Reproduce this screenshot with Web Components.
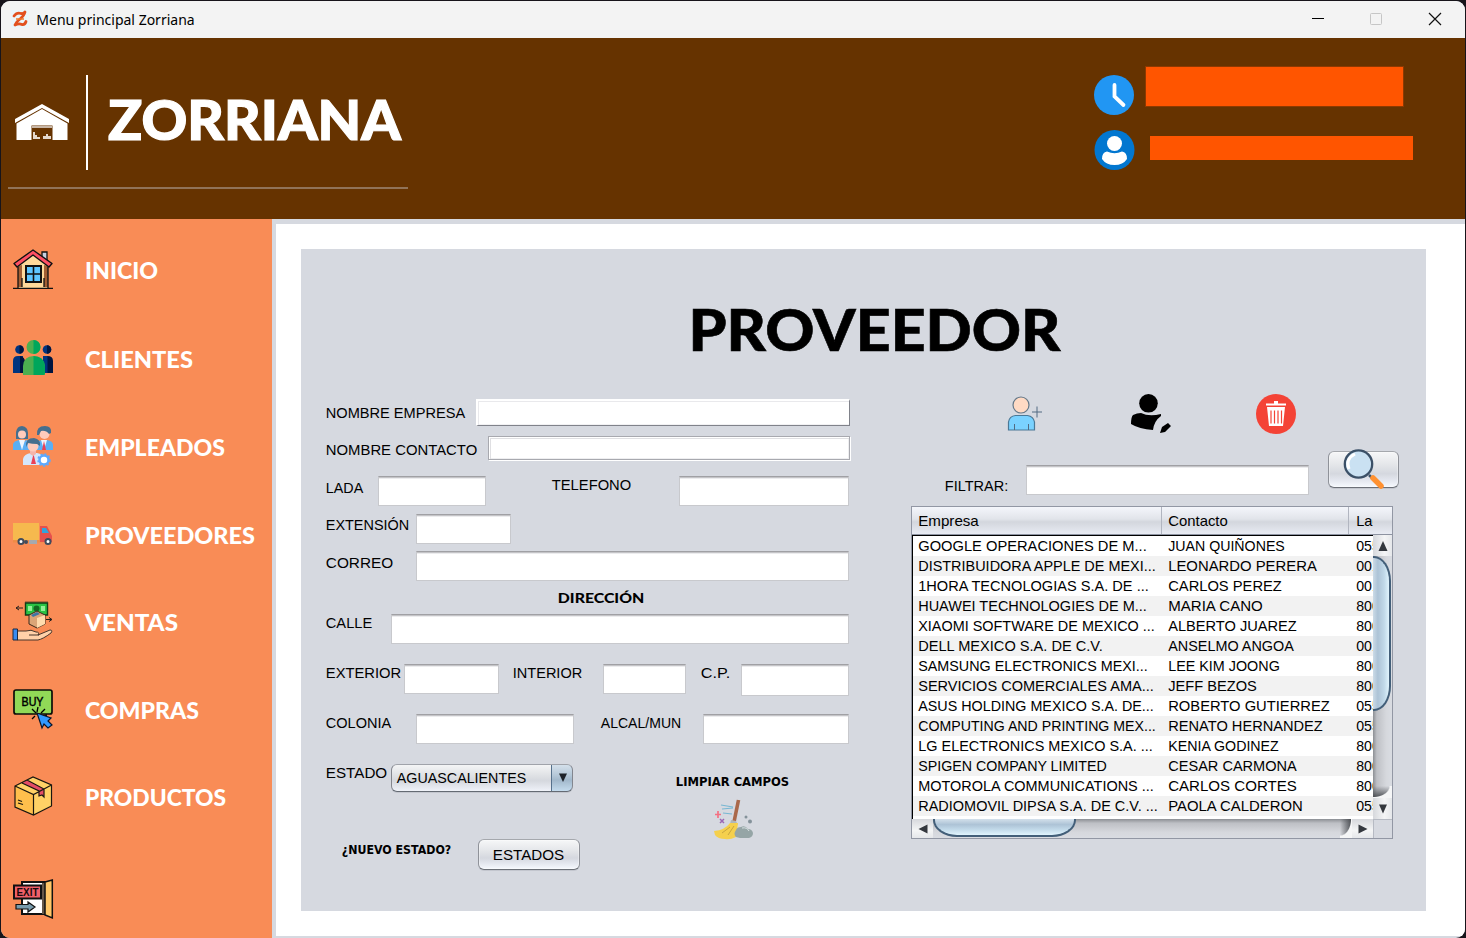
<!DOCTYPE html>
<html lang="es">
<head>
<meta charset="utf-8">
<title>Menu principal Zorriana</title>
<style>
html,body{margin:0;height:100%;background:#17141a;overflow:hidden}
body{font-family:"Liberation Sans",Arial,sans-serif;color:#000}
</style>
</head>
<body>
<zorriana-window></zorriana-window>
<script>
const define=(name,html,after)=>customElements.define(name,class extends HTMLElement{
  connectedCallback(){
    if(this.shadowRoot)return;
    this.attachShadow({mode:'open'}).innerHTML=typeof html==='function'?html(this):html;
    if(after)after(this);
  }
});

/* Text stretched to a given width, with a small bearing at each side */
define('fit-text',e=>`<style>
:host{display:block;flex:none;width:${e.getAttribute('w')}px;height:var(--lh,20px);line-height:var(--lh,20px);
font-size:15px;white-space:nowrap;margin:var(--y,0px) 0 0 var(--x,0px)}
span{display:inline-block;transform-origin:0 50%}
</style><span><slot></slot></span>`,e=>{
  const s=e.shadowRoot.querySelector('span'),n=s.getBoundingClientRect().width;
  const b=parseFloat(getComputedStyle(e).getPropertyValue('--bear')||'.8');
  if(n)s.style.transform=`translateX(${b}px) scaleX(${(e.getAttribute('w')-2*b)/n})`;
});

define('text-field',e=>`<style>
:host{display:block;flex:none;box-sizing:border-box;width:${e.getAttribute('w')}px;height:${e.getAttribute('h')||30}px;margin:var(--y,0px) 0 0 var(--x,0px)}
input{box-sizing:border-box;display:block;width:100%;height:100%;padding:0 6px;outline:0;border-radius:0;font:15px "Liberation Sans",sans-serif;
background:linear-gradient(#c4c4c7 0 1px,#ececee 1px 2px,#fff 2px);border:1px solid #c8c9cd;border-top:1px solid #a0a0a4}
:host([kind=raised]) input{background:#fff;border:2px solid #fff;border-right:1px solid #80828a;border-bottom:1px solid #80828a;box-shadow:inset 0 1px #e9e9ec,inset 1px 0 #e9e9ec,inset 0 -1px #f1f1f3}
:host([kind=etched]) input{background:#fff;border:1px solid #a8a9af;height:calc(100% - 1px);width:calc(100% - 1px);box-shadow:1px 1px #fff,inset 1px 1px #fff,inset 2px 2px #dfdfe2,inset -1px -1px #eeeef0}
</style><input aria-label="campo">`);

define('nimbus-button',e=>`<style>
:host{display:flex;flex:none;box-sizing:border-box;width:${e.getAttribute('w')}px;height:${e.getAttribute('h')}px;margin:var(--y,0px) 0 0 var(--x,0px);
border:1px solid #8f9299;border-top-color:#a5a8ad;border-bottom-color:#6c7078;border-radius:6px;
background:linear-gradient(#f6f7f8,#e5e7ea 35%,#d5d8df 62%,#e3e6ee 80%,#f6f9fe);box-shadow:0 1px #c3c6ce,inset 0 0 0 1px #ffffff55}
</style><slot></slot>`);

define('combo-box',`<style>
:host{display:flex;flex:none;box-sizing:border-box;width:182px;height:28px;margin:var(--y) 0 0 var(--x);justify-content:space-between;
border:1px solid #83868e;border-top-color:#a0a3aa;border-bottom-color:#646a73;border-radius:6px;overflow:hidden;
background:linear-gradient(#f4f5f6,#e2e4e7 35%,#d5d8de 60%,#e8ebf2 90%,#f0f3f9);box-shadow:0 1px #c3c6ce}
div{display:flex;width:20px;margin:-1px;border:1px solid #56718c;border-top-color:#7792a9;border-radius:0 6px 6px 0;background:linear-gradient(#d4e0eb,#b4c7d7 40%,#a2b8cb 58%,#c4dbed)}
svg{margin:7px 0 0 6px}
</style><slot></slot><div><svg width="10" height="11"><path d="M1 1.500h8L5 10z" fill="#1d2229"/></svg></div>`);

const icons={
home:`<path d="M5 16 20 3 35 16V39H5z" fill="#ffd99a"/><path d="M5 17v21h4V16zm30 0v21h-4V16z" fill="#a35f34"/><path d="M29 10V3h5v12" fill="#c9d1e0" stroke="#111" stroke-width="1.3"/><path d="M20 1 1 14.5 4 18 20 6 36 18l3-3.500z" fill="#ff5064" stroke="#111" stroke-width="1.4" stroke-linejoin="round"/><path d="M5 18v21M35 18v21M9 29v9M31 29v9M0 39.300h40" stroke="#111" stroke-width="1.300"/><path d="M13 17h15v16H13z" fill="#5fc6ff" stroke="#111" stroke-width="2"/><path d="M20.500 17v16M13 25h15" stroke="#111" stroke-width="1.600"/>`,
clients:`<g fill="#00347f"><circle cx="6.500" cy="11.500" r="4.300"/><path d="M0 35V23q0-5 5-5h5v17z"/><path d="M30 18v17h5V18z"/><circle cx="34" cy="11.500" r="4.300"/></g><g fill="#00153f"><path d="M6.500 7.200a4.300 4.300 0 0 1 0 8.600zM34 7.200a4.300 4.300 0 0 1 0 8.600zM7 18q5 1 5 6v11H7zM34.500 18q5.500 0 5.500 5v12h-5.500z"/></g><circle cx="20.500" cy="9" r="7" fill="#4caf50"/><path d="M10 37V28q1-10 10.500-10T32 28v9z" fill="#4caf50"/><path d="M20.500 2a7 7 0 0 1 0 14zm0 16Q31 18 32 28v7q0 2-3 2h-8.500z" fill="#00a65b"/>`,
staff:`<path d="M3 13V6q1-6 6-6 6 1 6 7v6z" fill="#456f8e"/><circle cx="9" cy="8.500" r="4" fill="#ffcbbb"/><path d="M0 24v-6q1-3 6-4l3 4 4-4q5 1 5 4v6z" fill="#5baff5"/><path d="m6 14 3 10 3-10" fill="#edf6ff"/><circle cx="31.500" cy="8" r="5" fill="#ffcbbb"/><path d="M24 9q-1-9 8-9 7 0 6 7l-2 1q-3-4-8-3l-2 4z" fill="#456f8e"/><path d="M23 24v-5q1-4 6-5h5q6 1 6 5v5z" fill="#5baff5"/><path d="M28 14h6l-3 10z" fill="#eef6ff"/><path d="m31 15-2 9h4z" fill="#ea4256"/><path d="M10 39v-6q1-5 8-6h6q6 1 7 6v6z" fill="#d5e7fc"/><path d="m20.500 28-2.500 10h5z" fill="#ea4256"/><path d="M17 24h6v4l-3 2-3-2z" fill="#f4b5aa"/><circle cx="20" cy="20" r="5.500" fill="#ffcbbb"/><path d="M13 21q-1-9 8-9 7 1 6 8l-3-2q-5 0-9-1z" fill="#456f8e"/><circle cx="31" cy="34" r="4.500" fill="#fff" stroke="#5ca9ff" stroke-width="2.500"/><circle cx="31" cy="34" r="6" fill="none" stroke="#5ca9ff" stroke-width="1.500" stroke-dasharray="2 2"/>`,
truck:`<path d="M0 9h26v17H0z" fill="#f6b94e"/><path d="M0 26h39v2.500H0z" fill="#ef8c46"/><path d="M27 12h7l5 10v6H27z" fill="#e6504c"/><path d="M29 14h4l3 5h-7z" fill="#32a3dc"/><path d="M16 26h8v4h-8z" fill="#a6a9ae"/><g fill="#fff" stroke="#404c5d" stroke-width="2"><circle cx="8" cy="27.500" r="2.500"/><circle cx="35" cy="27.500" r="2.500"/></g><circle cx="13" cy="28" r="2" fill="#404c5d"/>`,
sales:`<path d="M12 0h23v2H12z" fill="#b86a43"/><path d="M12.500 2h22v12h-22z" fill="#2ac345" stroke="#123c18" stroke-width="1.400"/><circle cx="23.500" cy="7.500" r="3" fill="#126821"/><path d="M15 5h4v5h-4zm13 0h4v5h-4z" fill="#91ef96"/><path d="M16 14 24 10l8 4v9l-8 4-8-4z" fill="#dba577" stroke="#3d2a1b"/><path d="m24 17 8-3v9l-8 4z" fill="#ffdbad"/><path d="m18 14 6-3 3 2-7 3z" fill="#3f75a5"/><path d="M3 7h7M6 5 3 7l3 2M33 18.500h6m-3-2 3 2-3 2" fill="none" stroke="#27201d"/><path d="M4 30h9q5-2 10 1 4 0 2 3l12-5q3 0 1 3-8 6-13 7H4z" fill="#ffd1a9" stroke="#46352a"/><path d="M16 34h10" stroke="#46352a"/><path d="M0 28h4.500v11H0z" fill="#388bf1" stroke="#1d2b42"/>`,
buy:`<rect x="1" y="1" width="38" height="24" rx="2" fill="#91d957" stroke="#0b0d08" stroke-width="1.700"/><text x="8.500" y="17" font-size="13.500" font-family="Liberation Sans" textLength="22" lengthAdjust="spacingAndGlyphs" stroke="#000" stroke-width=".5">BUY</text><path d="m24 23 1-5m3 6 4-4M23 24l-4-4m3 7-3 3m10-3 5-1" stroke="#000" stroke-width="1.300"/><path d="m24 24 14 5-3 3 4 4-4 3-4-4-2 4z" fill="#3199ff" stroke="#0b1528" stroke-width="1.200"/>`,
box:`<path d="m2 10 18-9 18.500 8v21L20.500 39 2 31z" fill="#ffd166"/><path d="m2 10 18.500 8.500V39L2 31z" fill="#ffbf4c"/><path d="m9 7 5-3 17 9v8l-2-2-3 1v-5z" fill="#e44d66"/><path d="m2 10 18-9 18.500 8v21L20.500 39 2 31zm0 0 18.500 8.500L38.500 9m-18 9.500V39M9 7l17 8v5l3-1 2 2v-8L14 4M5 24l4 1.500M5 27l5 1.500" fill="none" stroke="#1b1710" stroke-width="1.200"/>`,
exit:`<path d="M9 3h23v32H9z" fill="#fff" stroke="#111" stroke-width="2"/><path d="M29 4h3v31h-3z" fill="#655849"/><path d="m32 3 7.300-2v38L32 36z" fill="#ffc768" stroke="#111" stroke-width="1.500"/><path d="M1 6.500h27v13H1z" fill="#f06069" stroke="#111" stroke-width="2"/><text x="3.500" y="16.500" font-size="10" font-weight="bold" font-family="Liberation Sans" textLength="22" lengthAdjust="spacingAndGlyphs" fill="#19090b">EXIT</text><path d="M3 25.500h12V23l7 5-7 5v-3H3z" fill="#789bad" stroke="#111" stroke-width="1.200"/>`,
add:`<circle cx="16" cy="11" r="8" fill="#ffdac4" stroke="#647888" stroke-width="1.200"/><path d="M3.500 36V28q1-6 7-6.500h12q6 1 7 6.500v8z" fill="#7ad2ff" stroke="#4b7896" stroke-width="1.200"/><path d="M9.500 36v-6M23.500 36v-6M27 18h10M32 12.500v11" stroke="#526b82" stroke-width="1"/>`,
edit:`<circle cx="17.500" cy="9.300" r="9.300"/><path d="M2 21q4-2 8-2 8 4 20 1v2q-7 5-8 14Q8 35 0 30q0-7 2-9zM29 39l2-6 6-4 3 3-6 6z"/>`,
trash:`<circle cx="20" cy="20" r="20" fill="#f44336"/><path d="M10 9.500h8V7h4v2.500h8v2H10zM11 13h18l-2 19H13z" fill="#fff"/><path d="M15 16.500v13M18.500 16.500v13M22 16.500v13M25.500 16.500v13" stroke="#f44336" stroke-width="1.200"/>`,
search:`<path d="m26 26 5 5" stroke="#3d536a" stroke-width="2.500"/><circle cx="15.500" cy="15" r="13.700" fill="#cae1f2" stroke="#3b5067" stroke-width="2.300"/><path d="M6 20q-4-10 6-15" fill="none" stroke="#fff" stroke-width="3"/><path d="m30 29 8 8" stroke="#ff9131" stroke-width="5.500" stroke-linecap="round"/>`,
broom:`<path d="M24.500 1 20 23" stroke="#aa684a" stroke-width="3.600"/><path d="m7 6 12 2M8 10l11-1M9 14l9 1" stroke="#78b7d2" stroke-width="1.200"/><path d="M1 15.500h6M4 12v7" stroke="#f47183" stroke-width="1.700"/><path d="m6 20 4 4m0-4-4 4" stroke="#9a66b5" stroke-width="1.500"/><path d="m17 21 5 1 2 4-8-1z" fill="#aeb6bc"/><path d="M16 24h8l-2 14q-6 3-11 2-7 0-10-4l-1-4q11-1 16-8z" fill="#f5d04d"/><path d="m20 27-6 9m2-8-8 6" stroke="#c9a63d"/><path d="M22 38q-3-3 0-7 1-3 5-3 4-2 7 2 4 0 5 4 0 4-4 5H26z" fill="#95a5a6"/><path d="M28 29q5-1 7 3" fill="none" stroke="#d9e2e3"/><circle cx="32" cy="18" r="1.500" fill="#84929a"/><circle cx="36" cy="22.500" r="2" fill="#84929a"/>`,
clock:`<circle cx="20" cy="20" r="20" fill="#2196f3"/><path d="M20.500 10v11.500l9 8.500" fill="none" stroke="#fff" stroke-width="3.800" stroke-linecap="round"/>`,
user:`<circle cx="20.500" cy="20" r="20" fill="#0277d0"/><circle cx="20.500" cy="13.500" r="7.500" fill="#fff"/><path d="M8 29q0-7 5-7.500 7.500 3.500 15 0 5 .500 5 7.500-4 6-12.500 6T8 29z" fill="#fff"/>`
};
define('app-icon',e=>`<style>:host{display:block;flex:none;width:40px;height:40px;margin:var(--y,0px) 0 0 var(--x,0px)}svg{display:block;overflow:visible}</style>
<svg width="40" height="40" viewBox="0 0 40 40" fill="#000">${icons[e.getAttribute('name')]}</svg>`);

define('nav-item',e=>`<style>
:host{display:flex;height:40px;margin-top:var(--gap);padding-left:12px;color:#fff}
fit-text{--lh:40px;--x:31px;--y:2px;--bear:1;font:900 22px/40px Lato,sans-serif}
</style><app-icon name="${e.getAttribute('icon')}"></app-icon>${e.hasAttribute('w')?`<fit-text w="${e.getAttribute('w')}">${e.textContent}</fit-text>`:''}`);

define('title-bar',`<style>
:host{display:flex;flex:none;height:37px;background:#f3f3f3;font-family:"Noto Sans","Open Sans",sans-serif}
.logo{margin:9px 0 0 10px}fit-text{--x:7px;--y:8px;--bear:.3;font-size:14.500px}
.win{margin:11px 23px 0 auto}
</style><svg class="logo" width="18" height="18"><path d="M0 0h18v18H0z" fill="#eaf6fa"/><path d="M3 6q3-4 7-2.500 3 .500 4-1.500Q13 6 9 9q-4 3-5 6 4-2 7-.500 3 .500 4-3" fill="none" stroke="#e2511f" stroke-width="2.800" stroke-linecap="round" stroke-linejoin="round"/><path d="M5 9h8" stroke="#f07a2b" stroke-width="1.500"/></svg>
<fit-text w="159">Menu principal Zorriana</fit-text>
<svg class="win" width="131" height="15" fill="none"><path d="M1 6.500h12" stroke="#000"/><rect x="59.500" y="1.500" width="11" height="11" rx="1" stroke="#c6c6c6"/><path d="m118 1 12 12m0-12-12 12" stroke="#111" stroke-width="1.200"/></svg>`);

define('brand-header',`<style>
:host{display:flex;flex:none;height:181px;background:#630;color:#fff;justify-content:space-between}
.brand{width:400px;height:149px;margin-left:7px;border-bottom:2px solid #917358;display:flex}
.barn{margin:65px 0 0 6px}.bar{width:2px;height:95px;background:#fff;margin:37px 0 0 16px}
fit-text{font:900 56px/68px Lato,sans-serif;--lh:68px;--x:19px;--y:47px;--bear:1;-webkit-text-stroke:1.200px #fff}
.status{width:371px;display:flex;flex-direction:column}
.row{display:flex}.a{width:257px;height:39px;margin-left:12px;margin-top:-8px;background:#f50;outline:1px solid #8d3900;outline-offset:-.500px}
.b{width:263px;height:24px;margin:6px 0 0 16px;background:#f50}
</style><div class="brand"><svg class="barn" width="56" height="38"><path d="M28 1 55 16v4L28 5 1 20v-4z" fill="#fff"/><path d="M28 6 53.500 20.500V37H38.500V22.500H17.500V37H2.500V20.500z" fill="#fff"/><path d="M18 23h20v2H18z" fill="#c8b6a6"/><path d="M19 29h2v3h2v2h3v2h-7zm10 4h3v-2h2v2h3v3h-8z" fill="#e4d9cf"/></svg><div class="bar"></div><fit-text w="295">ZORRIANA</fit-text></div>
<div class="status"><div class="row" style="margin-top:37px"><app-icon name="clock"></app-icon><div class="a"></div></div><div class="row" style="margin-top:15px"><app-icon name="user"></app-icon><div class="b"></div></div></div>`);

define('side-nav',`<style>:host{display:block;flex:none;width:271px;background:#f98c56;padding-top:30px;box-sizing:border-box}</style>
<nav-item icon="home" w="75" style="--gap:0px">INICIO</nav-item>
<nav-item icon="clients" w="110" style="--gap:49px">CLIENTES</nav-item>
<nav-item icon="staff" w="142" style="--gap:48px">EMPLEADOS</nav-item>
<nav-item icon="truck" w="172" style="--gap:48px">PROVEEDORES</nav-item>
<nav-item icon="sales" w="95" style="--gap:47px">VENTAS</nav-item>
<nav-item icon="buy" w="116" style="--gap:48px">COMPRAS</nav-item>
<nav-item icon="box" w="143" style="--gap:47px">PRODUCTOS</nav-item>
<nav-item icon="exit" style="--gap:63px"></nav-item>`);

define('form-row',e=>`<style>:host{display:flex;align-items:flex-start;height:${e.getAttribute('h')}px}</style><slot></slot>`);

define('supplier-form',`<style>
:host{display:block;width:586px;flex:none}
.bold{font:bold 12px/20px "DejaVu Sans Condensed","DejaVu Sans",sans-serif}
</style>
<form-row h="38"><fit-text w="141" style="--y:9px">NOMBRE EMPRESA</fit-text><text-field kind="raised" w="374" h="27" style="--x:10px;--y:5px"></text-field></form-row>
<form-row h="38"><fit-text w="153" style="--y:8px">NOMBRE CONTACTO</fit-text><text-field kind="etched" w="363" h="25" style="--x:10px;--y:4px"></text-field></form-row>
<form-row h="38"><fit-text w="39" style="--y:8px">LADA</fit-text><text-field w="108" style="--x:14px;--y:6px"></text-field><fit-text w="81" style="--x:65px;--y:5px">TELEFONO</fit-text><text-field w="170" style="--x:47px;--y:6px"></text-field></form-row>
<form-row h="38"><fit-text w="85" style="--y:7px">EXTENSIÓN</fit-text><text-field w="95" style="--x:6px;--y:6px"></text-field></form-row>
<form-row h="38"><fit-text w="69" style="--y:7px">CORREO</fit-text><text-field w="433" style="--x:22px;--y:5px"></text-field></form-row>
<form-row h="24"><fit-text w="88" style="--x:232px;--y:4px;font:900 14px/20px Lato,sans-serif">DIRECCIÓN</fit-text></form-row>
<form-row h="50"><fit-text w="48" style="--y:5px">CALLE</fit-text><text-field w="458" style="--x:18px;--y:6px"></text-field></form-row>
<form-row h="50"><fit-text w="77" style="--y:5px">EXTERIOR</fit-text><text-field w="95" style="--x:2px;--y:6px"></text-field><fit-text w="71" style="--x:13px;--y:5px">INTERIOR</fit-text><text-field w="83" style="--x:20px;--y:6px"></text-field><fit-text w="31" style="--x:14px;--y:5px">C.P.</fit-text><text-field w="108" h="32" style="--x:10px;--y:6px"></text-field></form-row>
<form-row h="50"><fit-text w="67" style="--y:5px">COLONIA</fit-text><text-field w="158" style="--x:24px;--y:6px"></text-field><fit-text w="82" style="--x:26px;--y:5px">ALCAL/MUN</fit-text><text-field w="146" style="--x:21px;--y:6px"></text-field></form-row>
<form-row h="80"><fit-text w="63" style="--y:5px">ESTADO</fit-text><combo-box style="--x:3px;--y:6px"><fit-text w="131" style="--x:4px;--y:3px">AGUASCALIENTES</fit-text></combo-box>
<div style="margin:14px 0 0 102px"><fit-text class="bold" w="115">LIMPIAR CAMPOS</fit-text><app-icon name="broom" style="--x:39px;--y:7px"></app-icon></div></form-row>
<form-row h="32"><fit-text class="bold" w="111" style="--x:16px;--y:2px">¿NUEVO ESTADO?</fit-text><nimbus-button w="102" h="31" style="--x:26px;--y:1px"><fit-text w="73" style="--x:13px;--y:5px">ESTADOS</fit-text></nimbus-button></form-row>`);

const suppliers=[
['GOOGLE OPERACIONES DE M...',229,'JUAN QUIÑONES',117,'055'],
['DISTRIBUIDORA APPLE DE MEXI...',238,'LEONARDO PERERA',149,'001'],
['1HORA TECNOLOGIAS S.A. DE ...',231,'CARLOS PEREZ',114,'001'],
['HUAWEI TECHNOLOGIES DE M...',229,'MARIA CANO',95,'800'],
['XIAOMI SOFTWARE DE MEXICO ...',237,'ALBERTO JUAREZ',129,'800'],
['DELL MEXICO S.A. DE C.V.',185,'ANSELMO ANGOA',126,'001'],
['SAMSUNG ELECTRONICS MEXI...',230,'LEE KIM JOONG',112,'800'],
['SERVICIOS COMERCIALES AMA...',236,'JEFF BEZOS',89,'800'],
['ASUS HOLDING MEXICO S.A. DE...',236,'ROBERTO GUTIERREZ',162,'055'],
['COMPUTING AND PRINTING MEX...',238,'RENATO HERNANDEZ',155,'055'],
['LG ELECTRONICS MEXICO S.A. ...',235,'KENIA GODINEZ',111,'800'],
['SPIGEN COMPANY LIMITED',189,'CESAR CARMONA',129,'800'],
['MOTOROLA COMMUNICATIONS ...',236,'CARLOS CORTES',129,'800'],
['RADIOMOVIL DIPSA S.A. DE C.V. ...',240,'PAOLA CALDERON',135,'055']];

define('data-table',`<style>
:host{display:grid;box-sizing:border-box;width:482px;height:333px;grid-template:28px 284px 19px/461px 19px;border:1px solid #9297a4}
fit-text{--bear:.2}
.head,.row{display:grid;grid-template-columns:249px 187px 1fr}
.head{grid-column:1/3;background:linear-gradient(#f4f6fb,#e1e4ea 45%,#d3d6dd 55%,#e8ebf3);border-bottom:1px solid #8d93a1;box-sizing:border-box}
.head>*{border-left:1px solid #b1b5c0;box-sizing:border-box;overflow:hidden}.head>:first-child{border:0}
.head fit-text{--y:4px}.head .last{width:25px}
.body{background:#fff;border-top:1px solid #000;border-left:1px solid #000;box-sizing:border-box;overflow:hidden}
.row{height:20px;width:461px}.row:nth-child(even){background:#f2f2f2}
.v{display:flex;flex-direction:column;background:linear-gradient(90deg,#8c8f94,#bec0c5 20%,#d6d8dd 70%,#d9dce2);overflow:hidden}
.btn{display:flex;align-items:center;justify-content:center;background:linear-gradient(90deg,#d6d8dc,#f4f5f6 60%,#e5e7ea)}
.v .btn{height:21px;flex:none}.v .thumb{height:155px;box-sizing:border-box;border:2px solid #435f79;border-left:0;border-radius:0 17px 17px 0/0 25px 25px 0;background:linear-gradient(90deg,#ccdbe7,#adc3d6 30%,#c1d9e9 70%,#e0f4fd);margin-right:1px}
.v i{display:block;height:12px;margin-top:auto;background:radial-gradient(ellipse 18px 12px at 0 0,transparent 88%,#f5f6f7 96%),linear-gradient(#9b9da200,#484b50)}
.h{display:flex;background:linear-gradient(#8c8f94,#bec0c5 22%,#d6d8dd 70%,#d9dce2);overflow:hidden}
.h .btn{width:21px;flex:none;background:linear-gradient(#d6d8dc,#f4f5f6 60%,#e5e7ea)}
.h .thumb{width:143px;box-sizing:border-box;border:2px solid #435f79;border-top:0;border-radius:0 0 24px 24px/0 0 17px 17px;background:linear-gradient(#d3e0eb,#adc3d6 35%,#c1d9e9 65%,#e0f4fd);margin-bottom:1px}
.h i{width:12px;margin-left:auto;background:radial-gradient(ellipse 12px 18px at 0 0,transparent 88%,#f5f6f7 96%),linear-gradient(90deg,#9b9da200,#484b50)}
.corner{background:#d6d9e0;border-top:1px solid #b6bac3;border-left:1px solid #b6bac3}
svg{fill:#34383e}
</style><div class="head"><div><fit-text w="61" style="--x:6px">Empresa</fit-text></div><div><fit-text w="60" style="--x:6px">Contacto</fit-text></div><div class="last"><fit-text w="33" style="--x:7px">Lada</fit-text></div></div>
<div class="body">${suppliers.map(r=>`<div class="row"><fit-text w="${r[1]}" style="--x:5px">${r[0]}</fit-text><fit-text w="${r[3]}" style="--x:6px">${r[2]}</fit-text><fit-text w="24" style="--x:7px">${r[4]}</fit-text></div>`).join('')}</div>
<div class="v"><div class="btn"><svg width="10" height="10"><path d="M5 0l4.500 10h-9z"/></svg></div><div class="thumb"></div><i></i><div class="btn"><svg width="10" height="10"><path d="M5 9.500l4-9H1z"/></svg></div></div>
<div class="h"><div class="btn"><svg width="10" height="10"><path d="M.500 5l9-4.500v9z"/></svg></div><div class="thumb"></div><i></i><div class="btn"><svg width="10" height="10"><path d="M9.500 5l-9-4.500v9z"/></svg></div></div>
<div class="corner"></div>`);

define('supplier-list',`<style>:host{display:block;width:490px}</style>
<form-row h="40"><app-icon name="add" style="--x:94px"></app-icon><app-icon name="edit" style="--x:86px"></app-icon><app-icon name="trash" style="--x:85px"></app-icon></form-row>
<form-row h="72"><fit-text w="65" style="--x:33px;--y:42px">FILTRAR:</fit-text><text-field w="283" style="--x:17px;--y:31px"></text-field><nimbus-button w="71" h="37" style="--x:19px;--y:17px"><app-icon name="search" style="--x:14px;--y:-3px"></app-icon></nimbus-button></form-row>
<data-table></data-table>`);

define('supplier-panel',`<style>
:host{display:block;box-sizing:border-box;width:1125px;height:662px;background:#d6d9e0;padding-left:24px}
header{height:145px;display:flow-root}
.cols{display:flex}
header fit-text{font:900 58px/70px Lato,sans-serif;--lh:70px;--x:362px;--y:45px;--bear:1.5;-webkit-text-stroke:.600px #000}
</style><header><fit-text w="375">PROVEEDOR</fit-text></header>
<div class="cols"><supplier-form></supplier-form><supplier-list></supplier-list></div>`);

define('zorriana-window',`<style>
:host{display:flex;flex-direction:column;width:1464px;height:937px;margin:1px 0 0 1px;border-radius:9px;overflow:hidden;background:#d6d9e0}
.main{display:flex;flex:1}
.content{box-sizing:border-box;width:1189px;height:712px;margin:5px 0 0 4px;padding:25px 0 0 25px;background:#fff}
</style><title-bar></title-bar><brand-header></brand-header>
<div class="main"><side-nav></side-nav><div class="content"><supplier-panel></supplier-panel></div></div>`);
</script>
</body>
</html>
